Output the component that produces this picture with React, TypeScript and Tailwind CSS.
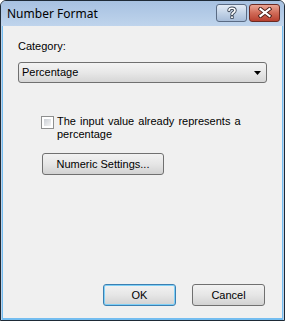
import React from "react";

const body = { fontFamily: '"Liberation Sans", Arial, sans-serif' } as React.CSSProperties;

export default function App() {
  return (
    <div
      className="w-[285px] h-[321px] flex flex-col bg-[#bcd2ea] border border-[#1e2a36] rounded-t-[6px] overflow-hidden text-black"
      style={body}
    >
      {/* Title bar */}
      <div className="h-[25px] shrink-0 flex items-center pl-[6px] pr-[4px] bg-gradient-to-b from-[#a7c1e1] to-[#bfd4ec]">
        <span className="text-[12px] leading-none mt-[1px]" style={{ fontFamily: '"Noto Sans", "Open Sans", sans-serif' }}>
          Number Format
        </span>
        <div className="ml-auto flex gap-[2px] mt-[-2px]">
          <div className="w-[31px] h-[18px] rounded-[3px] border border-[#5a6b84] bg-gradient-to-b from-[#e4ecf6] via-[#c3d3e7] to-[#a7bcd8] flex items-center justify-center">
            <svg width="12" height="13" viewBox="0 0 12 13">
              <path d="M3 4.5 C3 1.5 9 1.5 9 4.5 C9 6.5 6 6.5 6 8.5" fill="none" stroke="#3b4656" strokeWidth="3.4" strokeLinecap="round" />
              <path d="M3 4.5 C3 1.5 9 1.5 9 4.5 C9 6.5 6 6.5 6 8.5" fill="none" stroke="#ffffff" strokeWidth="1.6" strokeLinecap="round" />
              <rect x="4.3" y="9.6" width="3.4" height="3.2" fill="#3b4656" />
              <rect x="5.1" y="10.4" width="1.8" height="1.6" fill="#ffffff" />
            </svg>
          </div>
          <div className="w-[31px] h-[18px] rounded-[3px] border border-[#6b2a22] bg-gradient-to-b from-[#e9a594] via-[#d06a57] to-[#b8402f] flex items-center justify-center">
            <svg width="14" height="11" viewBox="0 0 14 11">
              <path d="M2.5 2 L11.5 9 M11.5 2 L2.5 9" stroke="#4a1d16" strokeWidth="4" strokeLinecap="square" />
              <path d="M2.5 2 L11.5 9 M11.5 2 L2.5 9" stroke="#ffffff" strokeWidth="2.2" strokeLinecap="square" />
            </svg>
          </div>
        </div>
      </div>

      {/* Client area */}
      <div className="flex-1 mx-[1px] border-x border-b-2 border-[#74bdf0] bg-[#f0f0f0] flex flex-col text-[11px]">
        <div className="mt-[14px] ml-[15px] leading-[13px]">Category:</div>

        <div className="mt-[9px] ml-[15px] w-[249px] h-[21px] rounded-[3px] border border-[#707070] bg-gradient-to-b from-[#f3f3f3] via-[#e8e8e8] to-[#d6d6d6] flex items-center pl-[3px] pr-[5px]">
          <span className="leading-[13px]">Percentage</span>
          <svg className="ml-auto" width="7" height="4" viewBox="0 0 7 4">
            <path d="M0 0 H7 L3.5 4 Z" fill="#000" />
          </svg>
        </div>

        <div className="mt-[32px] ml-[38px] flex">
          <div className="w-[13px] h-[13px] mt-[1px] border border-[#8e8f8f] bg-white p-[2px] shrink-0">
            <div className="w-full h-full bg-gradient-to-br from-[#cbcfd5] to-[#f4f4f4]" />
          </div>
          <div className="ml-[3px] leading-[13px] [word-spacing:1px]">
            The input value already represents a
            <br />
            percentage
          </div>
        </div>

        <div className="mt-[12px] ml-[39px] w-[122px] h-[22px] rounded-[3px] border border-[#707070] bg-gradient-to-b from-[#f2f2f2] via-[#e6e6e6] to-[#d2d2d2] flex items-center justify-center">
          <span className="leading-[13px]">Numeric Settings...</span>
        </div>

        <div className="mt-auto mb-[12px] mr-[17px] flex justify-end gap-[16px]">
          <div className="w-[73px] h-[22px] rounded-[3px] border border-[#3c7fb1] bg-gradient-to-b from-[#f2f2f2] via-[#e6e6e6] to-[#d2d2d2] flex items-center justify-center shadow-[inset_0_0_0_1px_#7fd0f7]">
            <span className="leading-[13px]">OK</span>
          </div>
          <div className="w-[73px] h-[22px] rounded-[3px] border border-[#707070] bg-gradient-to-b from-[#f2f2f2] via-[#e6e6e6] to-[#d2d2d2] flex items-center justify-center">
            <span className="leading-[13px]">Cancel</span>
          </div>
        </div>
      </div>
    </div>
  );
}
